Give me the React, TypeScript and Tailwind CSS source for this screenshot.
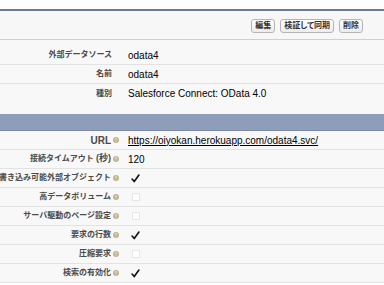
import type { ReactNode } from "react";

const font = "font-['Liberation_Sans','Noto_Sans_CJK_JP',sans-serif]";

function HelpIcon() {
  return (
    <svg width="6" height="6" viewBox="0 0 6 6" className="ml-[2px] inline-block shrink-0">
      <circle cx="3" cy="3" r="3" fill="#c2b18d" />
      <path d="M2.1 2.3 C2.1 1.4 3.9 1.4 3.9 2.3 C3.9 2.9 3 2.9 3 3.6" stroke="#f4efe3" strokeWidth="0.8" fill="none" />
      <circle cx="3" cy="4.6" r="0.45" fill="#f4efe3" />
    </svg>
  );
}

function Check() {
  return (
    <svg width="9" height="9" viewBox="0 0 10 10" className="ml-[3px]">
      <path d="M1.2 5.6 L3.6 8.4 L8.8 1.2" stroke="#111" strokeWidth="1.8" fill="none" strokeLinecap="round" strokeLinejoin="round" />
    </svg>
  );
}

function Box() {
  return <div className="ml-[4px] h-[8px] w-[8px] rounded-[1px] border border-[#e6e6e6] bg-white" />;
}

function Row({ label, children, help, last }: { label: ReactNode; children: ReactNode; help?: boolean; last?: boolean }) {
  return (
    <div className={`flex h-[19px] items-center ${last ? "" : "border-b border-[#e3e3e3]"}`}>
      <div
        className={`flex w-[121px] shrink-0 items-center justify-end whitespace-nowrap text-[8px] font-bold text-[#4a4a4a] ${help ? "pr-[2px]" : "pr-[9px]"}`}
      >
        <span>{label}</span>
        {help ? <HelpIcon /> : null}
      </div>
      <div className="flex items-center pl-[7px] text-[10px] text-black">{children}</div>
    </div>
  );
}

function Btn({ children }: { children: ReactNode }) {
  return (
    <button
      type="button"
      className="h-[14px] rounded-[3px] border border-[#b5b5b5] bg-gradient-to-b from-white to-[#ececec] px-[3px] text-[8px] leading-[12px] font-bold text-[#333] [font-feature-settings:'palt']"
    >
      {children}
    </button>
  );
}

export default function App() {
  return (
    <div className={`h-[285px] w-[384px] overflow-hidden bg-white ${font}`}>
      <div className="h-[9px] bg-white" />
      <div className="h-[2px] bg-[#6b7893]" />
      <div className="flex h-[29px] items-center justify-end gap-[5px] border-b border-[#cfcfcf] bg-[#f7f7f7] pr-[21px] pt-[2px]">
        <Btn>編集</Btn>
        <Btn>検証して同期</Btn>
        <Btn>削除</Btn>
      </div>
      <div className="bg-[#f8f8f8] pt-[6px]">
        <Row label="外部データソース">odata4</Row>
        <Row label="名前">odata4</Row>
        <Row label="種別" last>
          Salesforce Connect: OData 4.0
        </Row>
        <div className="h-[11px]" />
        <div className="h-[17px] border-b border-[#7d8ba7] bg-[#8e9dba]" />
        <Row label={<span className="text-[10px]">URL</span>} help>
          <span className="underline">https://oiyokan.herokuapp.com/odata4.svc/</span>
        </Row>
        <Row
          label={
            <>
              接続タイムアウト <span className="text-[9px]">(秒)</span>
            </>
          }
          help
        >
          120
        </Row>
        <Row label="書き込み可能外部オブジェクト" help>
          <Check />
        </Row>
        <Row label="高データボリューム" help>
          <Box />
        </Row>
        <Row label="サーバ駆動のページ設定" help>
          <Box />
        </Row>
        <Row label="要求の行数" help>
          <Check />
        </Row>
        <Row label="圧縮要求" help>
          <Box />
        </Row>
        <Row label="検索の有効化" help>
          <Check />
        </Row>
      </div>
    </div>
  );
}
